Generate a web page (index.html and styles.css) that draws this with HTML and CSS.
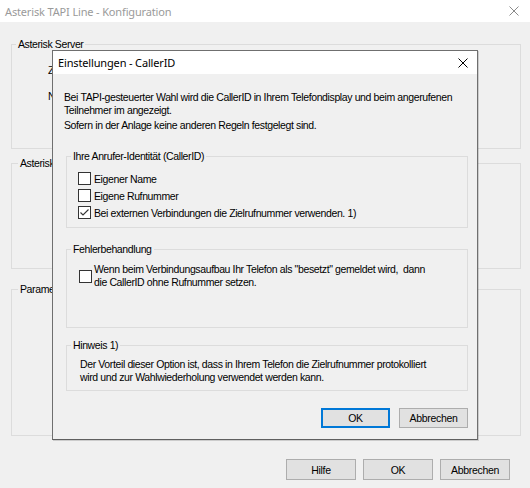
FILE: index.html
```html
<!DOCTYPE html>
<html lang="de">
<head>
<meta charset="utf-8">
<title>Asterisk TAPI Line - Konfiguration</title>
<link rel="stylesheet" href="styles.css">
</head>
<body>
<div class="window">
  <div class="titlebar">
    <span class="title-text inactive">Asterisk TAPI Line - Konfiguration</span>
    <svg class="close-x" width="10" height="10" viewBox="0 0 10 10"><path d="M0.5 0.5 L9.5 9.5 M9.5 0.5 L0.5 9.5" stroke="#8a8a8a" stroke-width="1" fill="none"/></svg>
  </div>
  <div class="main">
    <div class="group bg g1">
      <span class="legend">Asterisk Server</span>
      <div class="bg-row r1">Zugang</div>
      <div class="bg-row r2">Name</div>
    </div>
    <div class="group bg g2">
      <span class="legend">Asterisk Login</span>
    </div>
    <div class="group bg g3">
      <span class="legend">Parameter</span>
    </div>
    <div class="main-buttons">
      <button class="btn">Hilfe</button>
      <button class="btn">OK</button>
      <button class="btn">Abbrechen</button>
    </div>
  </div>

  <div class="dialog">
    <div class="dlg-titlebar">
      <span class="title-text">Einstellungen - CallerID</span>
      <svg class="close-x" width="10" height="10" viewBox="0 0 10 10"><path d="M0.5 0.5 L9.5 9.5 M9.5 0.5 L0.5 9.5" stroke="#000" stroke-width="1" fill="none"/></svg>
    </div>
    <div class="dlg-body">
      <p class="intro">Bei TAPI-gesteuerter Wahl wird die CallerID in Ihrem Telefondisplay und beim angerufenen<br>Teilnehmer im angezeigt.</p>
      <p class="intro p2">Sofern in der Anlage keine anderen Regeln festgelegt sind.</p>

      <div class="group dg1">
        <span class="legend">Ihre Anrufer-Identität (CallerID)</span>
        <div class="checks">
          <label class="check"><span class="box"></span><span>Eigener Name</span></label>
          <label class="check"><span class="box"></span><span>Eigene Rufnummer</span></label>
          <label class="check"><span class="box"><svg width="11" height="11" viewBox="0 0 11 11"><path d="M1.5 5.5 L4 8 L9.5 2.5" stroke="#333" stroke-width="1.1" fill="none"/></svg></span><span>Bei externen Verbindungen die Zielrufnummer verwenden. 1)</span></label>
        </div>
      </div>

      <div class="group dg2">
        <span class="legend">Fehlerbehandlung</span>
        <label class="check multi"><span class="box"></span><span>Wenn beim Verbindungsaufbau Ihr Telefon als "besetzt" gemeldet wird,&nbsp; dann<br>die CallerID ohne Rufnummer setzen.</span></label>
      </div>

      <div class="group dg3">
        <span class="legend">Hinweis 1)</span>
        <p class="note">Der Vorteil dieser Option ist, dass in Ihrem Telefon die Zielrufnummer protokolliert<br>wird und zur Wahlwiederholung verwendet werden kann.</p>
      </div>

      <div class="dlg-buttons">
        <button class="btn default">OK</button>
        <button class="btn">Abbrechen</button>
      </div>
    </div>
  </div>
</div>
</body>
</html>
```

FILE: styles.css
```css
* { box-sizing: border-box; }
html, body {
  margin: 0;
  padding: 0;
  background: #f0f0f0;
}
body {
  width: 530px;
  height: 488px;
  overflow: hidden;
  font-family: "Liberation Sans", Arial, sans-serif;
  font-size: 10.5px;
  letter-spacing: -0.38px;
  color: #000;
}
.window {
  position: relative;
  width: 530px;
  height: 488px;
}
.titlebar {
  height: 22px;
  background: #fff;
  display: flex;
  align-items: center;
  justify-content: space-between;
  padding: 0 11px 0 5px;
}
.title-text {
  font-family: "Noto Sans", "Open Sans", sans-serif;
  font-size: 11px;
  letter-spacing: -0.15px;
  white-space: nowrap;
}
.title-text.inactive { color: #9a9a9a; }
.close-x { display: block; }

.main {
  padding: 22px 9px 0 11px;
  display: flex;
  flex-direction: column;
}
.group {
  border: 1px solid #dcdcdc;
  display: flex;
  flex-direction: column;
}
.legend {
  display: block;
  align-self: flex-start;
  height: 13px;
  line-height: 13px;
  margin: -7px 0 0 4px;
  padding: 0 2px;
  background: #f0f0f0;
  white-space: nowrap;
}
.bg.g1 { height: 105px; }
.bg.g2 { height: 106px; margin-top: 14px; }
.bg.g3 { height: 147px; margin-top: 20px; }
.g2 .legend, .g3 .legend { margin-left: 6px; }
.bg-row {
  padding-left: 36px;
  line-height: 13px;
}
.bg-row.r1 { margin-top: 13px; }
.bg-row.r2 { margin-top: 13px; }

.main-buttons {
  display: flex;
  justify-content: flex-end;
  gap: 7px;
  margin-top: 23px;
  padding-right: 11px;
}
.btn {
  width: 70px;
  height: 21px;
  background: #e1e1e1;
  border: 1px solid #adadad;
  font-family: "Liberation Sans", Arial, sans-serif;
  font-size: 10.5px;
  letter-spacing: -0.3px;
  color: #000;
  padding: 0;
}
.btn.default {
  border: 1px solid #0078d7;
  box-shadow: inset 0 0 0 1px #0078d7;
}

.dialog {
  position: absolute;
  left: 52px;
  top: 50px;
  width: 426px;
  height: 390px;
  border: 1px solid #6f6f6f;
  border-bottom-color: #5f5f5f;
  background: #f0f0f0;
  box-shadow: 1px 1px 0 rgba(0,0,0,0.15);
  display: flex;
  flex-direction: column;
}
.dlg-titlebar {
  height: 23px;
  background: #fff;
  display: flex;
  align-items: center;
  justify-content: space-between;
  padding: 0 9px 0 5px;
  flex: none;
}
.dlg-body {
  padding: 17px 9px 0 11px;
  display: flex;
  flex-direction: column;
}
.intro {
  margin: 0;
  line-height: 13px;
  white-space: nowrap;
}
.intro.p2 { margin-top: 2px; }

.dg1 { height: 72px; margin: 24px 0 0 2px; }
.dg2 { height: 79px; margin: 21px 0 0 2px; }
.dg3 { height: 46px; margin: 17px 0 0 2px; }

.checks {
  display: flex;
  flex-direction: column;
  padding: 7px 0 0 11px;
}
.check {
  display: flex;
  align-items: center;
  gap: 3px;
  height: 17px;
  white-space: nowrap;
}
.box {
  width: 13px;
  height: 13px;
  background: #fff;
  border: 1px solid #333;
  flex: none;
  display: flex;
  align-items: center;
  justify-content: center;
}
.box svg { display: block; }
.check.multi {
  height: 26px;
  margin: 7px 0 0 12px;
  gap: 2px;
  line-height: 13px;
}
.note {
  margin: 6px 0 0 13px;
  line-height: 13px;
  white-space: nowrap;
}
.dlg-buttons {
  display: flex;
  justify-content: flex-end;
  gap: 9px;
  margin-top: 17px;
  padding-right: 0;
}
.dlg-buttons .btn { height: 20px; width: 69px; }
```
